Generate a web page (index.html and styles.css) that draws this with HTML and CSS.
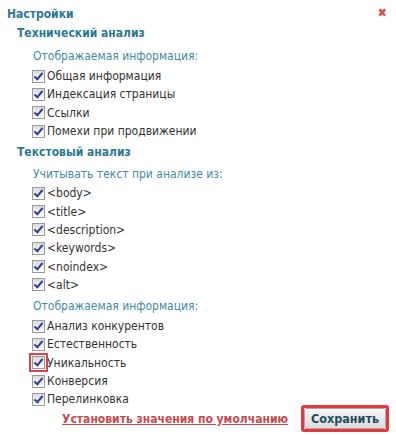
FILE: index.html
```html
<!DOCTYPE html>
<html lang="ru">
<head>
<meta charset="utf-8">
<title>Настройки</title>
<link rel="stylesheet" href="styles.css">
</head>
<body>
<div class="panel">
  <div class="title-row">
    <span class="title">Настройки</span>
    <span class="close">&#10006;</span>
  </div>

  <div class="section-title">Технический анализ</div>
  <div class="group">
    <div class="sub sub1">Отображаемая информация:</div>
    <label class="row"><span class="cb"></span>Общая информация</label>
    <label class="row"><span class="cb"></span>Индексация страницы</label>
    <label class="row"><span class="cb"></span>Ссылки</label>
    <label class="row"><span class="cb"></span>Помехи при продвижении</label>
  </div>

  <div class="section-title second">Текстовый анализ</div>
  <div class="group">
    <div class="sub sub-text">Учитывать текст при анализе из:</div>
    <label class="row"><span class="cb"></span>&lt;body&gt;</label>
    <label class="row"><span class="cb"></span>&lt;title&gt;</label>
    <label class="row"><span class="cb"></span>&lt;description&gt;</label>
    <label class="row"><span class="cb"></span>&lt;keywords&gt;</label>
    <label class="row"><span class="cb"></span>&lt;noindex&gt;</label>
    <label class="row"><span class="cb"></span>&lt;alt&gt;</label>
    <div class="sub sub2">Отображаемая информация:</div>
    <label class="row"><span class="cb"></span>Анализ конкурентов</label>
    <label class="row"><span class="cb"></span>Естественность</label>
    <label class="row"><span class="cb hl"></span>Уникальность</label>
    <label class="row"><span class="cb"></span>Конверсия</label>
    <label class="row"><span class="cb"></span>Перелинковка</label>
  </div>

  <div class="footer">
    <a class="reset" href="#">Установить значения по умолчанию</a>
    <span class="save-wrap"><button class="save" type="button">Сохранить</button></span>
  </div>
</div>
</body>
</html>
```
FILE: styles.css
```css
html, body {
  margin: 0;
  padding: 0;
  background: #ffffff;
}
body {
  font-family: "DejaVu Sans Condensed", "DejaVu Sans", sans-serif;
  font-size: 12px;
  color: #333333;
}
.panel {
  width: 396px;
  height: 435px;
  box-sizing: border-box;
  padding: 4px 4px 0 7px;
}
.title-row {
  display: flex;
  justify-content: space-between;
  align-items: center;
  height: 19px;
}
.title {
  font-weight: bold;
  font-size: 12px;
  color: #2c7893;
}
.close {
  color: #d9534f;
  font-size: 12.5px;
  margin-right: 5px;
  line-height: 1;
}
.section-title {
  font-weight: bold;
  font-size: 12px;
  color: #2c7893;
  line-height: 18px;
  margin: 1px 0 0 10px;
}
.section-title.second {
  margin-top: 3px;
}
.group {
  padding-left: 25px;
}
.sub {
  color: #3f8aa8;
  line-height: 18px;
  margin: 5px 0 1px 1px;
  font-size: 12px;
}
.sub.sub1 {
  margin-bottom: 2px;
}
.sub.sub-text {
  margin-top: 4px;
}
.sub.sub2 {
  margin-top: 3px;
  margin-bottom: 2px;
}
.row {
  display: flex;
  align-items: center;
  height: 18.3px;
  font-size: 12px;
  color: #333333;
}
.cb {
  position: relative;
  width: 11px;
  height: 11px;
  border: 1px solid #9a9b9b;
  background: linear-gradient(#dcdcdc, #ffffff);
  margin-right: 2px;
  flex: none;
}
.cb::after {
  content: "";
  position: absolute;
  left: 3px;
  top: 0px;
  width: 3px;
  height: 7px;
  border: solid #2f3f9c;
  border-width: 0 2px 2px 0;
  transform: rotate(40deg);
}
.cb.hl {
  outline: 2px solid #e2414b;
  outline-offset: 1px;
}
.footer {
  display: flex;
  justify-content: flex-end;
  align-items: center;
  margin-top: -3px;
  padding-right: 3px;
}
.reset {
  color: #c8494b;
  font-weight: bold;
  font-size: 12px;
  text-decoration: underline;
  margin-right: 13px;
}
.save-wrap {
  display: inline-block;
  border: 3px solid #e3383f;
  border-radius: 3px;
  padding: 0;
}
.save {
  font-family: inherit;
  font-weight: bold;
  font-size: 12.5px;
  color: #1f4d60;
  background: linear-gradient(#f6f6f6, #dcdcdc);
  border: 1px solid #a9a9a9;
  border-radius: 2px;
  height: 21px;
  width: 82px;
  padding: 0;
  margin: 0;
}
```
